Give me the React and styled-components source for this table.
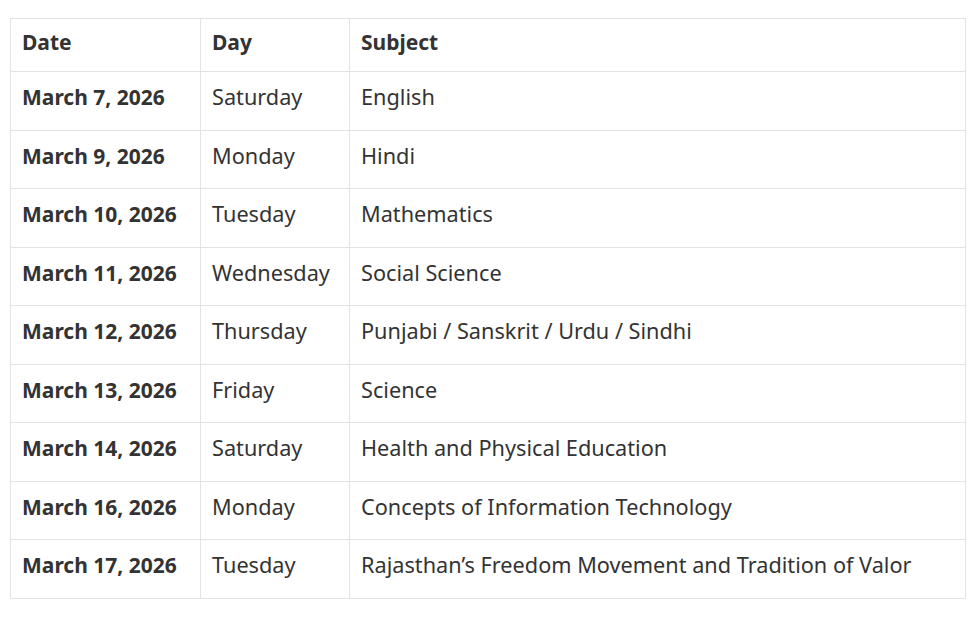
import styled, { createGlobalStyle } from "styled-components";

const GlobalStyle = createGlobalStyle`
  html, body {
    margin: 0;
    padding: 0;
    background: #fff;
  }
  body {
    font-family: "Noto Sans", "Open Sans", sans-serif;
    color: #333;
  }
`;

const Page = styled.div`
  padding: 18px 6px 0 10px;
`;

const Table = styled.table`
  width: 956px;
  border-collapse: collapse;
  font-size: 21.7px;
  line-height: 28px;
  table-layout: fixed;
`;

const HeadCell = styled.th`
  box-sizing: border-box;
  text-align: left;
  font-size: 21px;
  font-weight: 700;
  height: 53px;
  padding: 0 11px 6px;
  border: 1px solid #e3e3e3;
  width: ${({ $w }) => $w || "auto"};
`;

const Cell = styled.td`
  box-sizing: border-box;
  height: 58.5px;
  padding: 0 11px 7px;
  border: 1px solid #e3e3e3;
  font-size: ${({ $bold }) => ($bold ? "21px" : "21.7px")};
  font-weight: ${({ $bold }) => ($bold ? 700 : 400)};
  white-space: nowrap;
`;

const rows = [
  ["March 7, 2026", "Saturday", "English"],
  ["March 9, 2026", "Monday", "Hindi"],
  ["March 10, 2026", "Tuesday", "Mathematics"],
  ["March 11, 2026", "Wednesday", "Social Science"],
  ["March 12, 2026", "Thursday", "Punjabi / Sanskrit / Urdu / Sindhi"],
  ["March 13, 2026", "Friday", "Science"],
  ["March 14, 2026", "Saturday", "Health and Physical Education"],
  ["March 16, 2026", "Monday", "Concepts of Information Technology"],
  ["March 17, 2026", "Tuesday", "Rajasthan’s Freedom Movement and Tradition of Valor"],
];

export default function App() {
  return (
    <Page>
      <GlobalStyle />
      <Table>
        <thead>
          <tr>
            <HeadCell $w="190px">Date</HeadCell>
            <HeadCell $w="149px">Day</HeadCell>
            <HeadCell>Subject</HeadCell>
          </tr>
        </thead>
        <tbody>
          {rows.map(([date, day, subject]) => (
            <tr key={date}>
              <Cell $bold>{date}</Cell>
              <Cell>{day}</Cell>
              <Cell>{subject}</Cell>
            </tr>
          ))}
        </tbody>
      </Table>
    </Page>
  );
}
